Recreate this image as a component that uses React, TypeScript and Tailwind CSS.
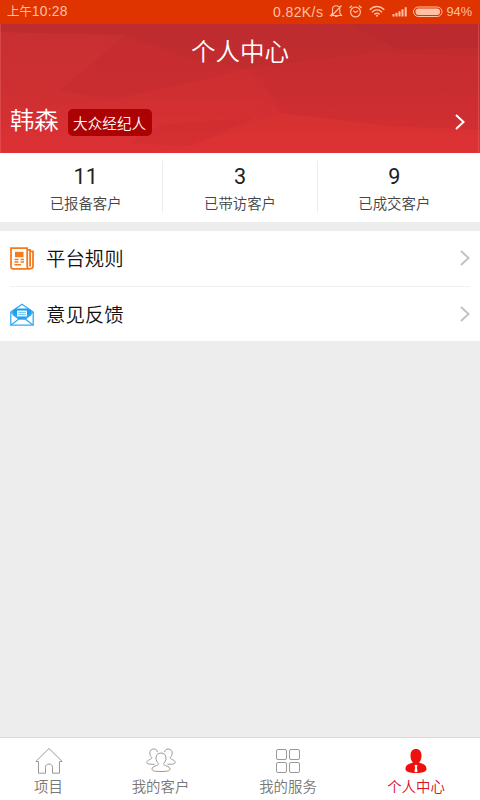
import type { ReactNode } from 'react';

const cjk = "font-['Roboto','Noto_Sans_CJK_SC',sans-serif]";

function StatusBar() {
  return (
    <div className="flex h-6 items-center bg-[#df3300] pl-[7px] font-['Liberation_Sans','Noto_Sans_CJK_SC',sans-serif] text-[#ffc0a4]">
      <span className="flex w-[266px] text-[12.4px] leading-6 whitespace-nowrap">
        上午<span className="text-[13.8px] tracking-[.3px]">10:28</span>
      </span>
      <span className="w-[56px] text-[14px] leading-6 tracking-[.4px] whitespace-nowrap">0.82K/s</span>
      <svg width="151" height="24" viewBox="329 0 151 24" fill="none" stroke="#ffc0a4" className="shrink-0">
        <path d="M330.5 15.5h11l-1.7-2.3V9.3c0-2.2-1.5-3.6-3.6-3.6s-3.7 1.4-3.7 3.6v3.9zM334.8 16.5h3M341.5 5.5l-10.500 11" strokeWidth="1.1" />
        <circle cx="355.5" cy="12" r="4.9" strokeWidth="1.2" />
        <path d="m353.2 10.8 2.3 1.7 2.5-1.7M349.5 8l2.6-2.3M361.6 8 359 5.7" strokeWidth="1.2" />
        <path d="M369.7 9.7c4.4-4.2 10.2-4.2 14.6 0M372 12.2c3-3 7-3 10 0M374.4 14.4c1.6-1.5 3.6-1.5 5.2 0" strokeWidth="1.5" />
        <circle cx="377" cy="15.8" r="1" fill="#ffc0a4" stroke="none" />
        <path d="M393.5 14v2.5M396.5 12.8v3.7M399.5 11.2v5.3M402.5 9.3v7.2M405.7 7.2v9.3" strokeWidth="2" />
        <rect x="413.5" y="7" width="28.5" height="9.5" rx="4.7" />
        <rect x="415.5" y="8.5" width="24.5" height="6.5" rx="3" fill="#ffc0a4" stroke="none" />
        <text x="446.5" y="16.3" fill="#ffc0a4" stroke="none" fontSize="12.8" fontFamily="Liberation Sans">94%</text>
      </svg>
    </div>
  );
}

function Facets() {
  return (
    <svg className="absolute inset-0" width="480" height="129" viewBox="0 24 480 129">
      <defs>
        <linearGradient id="base" x1="0" y1="0" x2="0" y2="1">
          <stop offset="0" stopColor="#c52e31" />
          <stop offset=".5" stopColor="#cd2f31" />
          <stop offset="1" stopColor="#dd3134" />
        </linearGradient>
      </defs>
      <rect y="24" width="480" height="129" fill="url(#base)" />
      <path d="M0 24h480v32l-103-4-132 16-58-11-62-22L0 32z" fill="#aa252b" opacity=".26" />
      <path d="M350 24h130v23l-80 3z" fill="#a9242b" opacity=".16" />
      <path d="M125 35 60 90 0 110V32z" fill="#d23535" opacity=".18" />
      <path d="m125 35 62 22 58 11-10 4-125 28-50-10z" fill="#bc292f" opacity=".18" />
      <path d="m245 68 132-16 103 4v27l-200 30-17-32z" fill="#bd2a2f" opacity=".2" />
      <path d="m110 100 125-28 18 0 10 35-123 27-90-10z" fill="#d83033" opacity=".2" />
      <path d="m280 113 200-30v47l-90-4z" fill="#bd2a2f" opacity=".2" />
      <path d="m130 143 60 3 63-28-93 7z" fill="#b8262c" opacity=".16" />
      <path d="m190 146 90-33 110 13 90 4v23H150z" fill="#e53838" opacity=".16" />
      <path d="M.5 24v129M478.5 24v129" stroke="#ec6262" opacity=".45" />
    </svg>
  );
}

function Header() {
  return (
    <header className="relative h-[129px]">
      <Facets />
      <div className="relative flex h-full flex-col text-white">
        <h1 className="h-[54px] pt-0.5 text-center text-[24.5px] leading-[54px] font-[350]">个人中心</h1>
        <div className="mt-[28px] flex h-8 items-center pr-[14px] pl-2.5">
          <span className="-mt-[3px] text-[24.3px] leading-8 font-[350]">韩森</span>
          <span className="ml-[9px] flex h-[27px] w-[84px] items-center justify-center rounded-[5px] bg-[#ad0204] pt-[3px] text-[14.6px] leading-[22px] font-[350] whitespace-nowrap">大众经纪人</span>
          <svg width="12" height="18" viewBox="0 0 12 18" fill="none" stroke="white" strokeWidth="2" className="ml-auto">
            <path d="m2 2 7.5 7L2 16" />
          </svg>
        </div>
      </div>
    </header>
  );
}

function Stat({ value, label, divider }: { value: string; label: string; divider?: boolean }) {
  return (
    <div className={`flex h-[52px] flex-1 flex-col items-center ${divider ? 'border-r border-[#ededed]' : ''}`}>
      <span className="mt-1 text-[21.6px] leading-6 text-[#222]">{value}</span>
      <span className="mt-[5px] text-[14.4px] leading-[22px] font-[350] text-[#444]">{label}</span>
    </div>
  );
}

function NewsIcon() {
  return (
    <svg width="24" height="24" viewBox="0 0 24 24" fill="none" stroke="#f47b20" strokeWidth="1.8">
      <path d="M1 1.2h16.2v18.3c0 1.5.7 2.3 1.9 2.3H3.2C1.7 21.8 1 21 1 19.5zM17.2 2.8h2.9v16.7M20.1 4.3h2.9v14.9c0 1.7-1.2 2.6-3.9 2.6" />
      <path d="M5 4.8h8.5v5.4H5z" fill="#f47b20" stroke="none" />
      <path d="M4.5 12.5h4M10.5 12.5H14M4.5 15h4M10.5 15H14M4.5 17.7H11" strokeWidth="1.4" />
    </svg>
  );
}

function MailIcon() {
  return (
    <svg width="24" height="24" viewBox="0 0 24 24" fill="none" stroke="#35aaf0" strokeWidth="1.3">
      <path d="M.8 9 12 1.3 23.2 9v13.2H.8z" />
      <path d="M2.500 7.5 6 5.5h12l3.500 2V12l-6 4.5h-7L2.500 12z" fill="#209eee" stroke="none" />
      <path d="m1 9 8.2 6.8h5.6L23 9M1 22l8.2-6.2M23 22l-8.2-6.2" />
      <path d="M7 7.500h10v6H7z" fill="#e3f5ff" stroke="none" />
      <path d="M8.3 9.500h7.4M8.3 11.500h7.4" stroke="#65bff5" strokeWidth=".8" />
    </svg>
  );
}

function Row({ icon, label }: { icon: ReactNode; label: string }) {
  return (
    <div className="flex h-[55px] items-center">
      {icon}
      <span className="mt-[3px] ml-3 text-[19.4px] leading-7 font-[350] text-[#111]">{label}</span>
      <svg width="12" height="18" viewBox="0 0 12 18" fill="none" stroke="#c3c3c3" strokeWidth="2" className="-mt-px mr-[-1px] ml-auto">
        <path d="m2 2 7.5 7L2 16" />
      </svg>
    </div>
  );
}

function Tab({ icon, label, width, active }: { icon: ReactNode; label: string; width: string; active?: boolean }) {
  return (
    <div className={`flex flex-col items-center ${width} ${active ? 'text-[#d6101c]' : 'text-[#777]'}`}>
      <svg width="30" height="28" viewBox="0 0 30 28" fill="none" stroke="#999" strokeWidth="1" className="mt-[9px]">
        {icon}
      </svg>
      <span className="mt-0.5 text-[14.4px] leading-[22px] font-[350] whitespace-nowrap">{label}</span>
    </div>
  );
}

export default function App() {
  return (
    <div className={`flex h-[800px] w-[480px] flex-col overflow-hidden bg-[#ededed] ${cjk}`}>
      <StatusBar />
      <Header />
      <section className="flex h-[69px] bg-white px-[9px] pt-2">
        <Stat value="11" label="已报备客户" divider />
        <Stat value="3" label="已带访客户" divider />
        <Stat value="9" label="已成交客户" />
      </section>
      <section className="mt-[9px] h-[110px] bg-white px-2.5">
        <Row icon={<NewsIcon />} label="平台规则" />
        <div className="border-t border-[#efefef]">
          <Row icon={<MailIcon />} label="意见反馈" />
        </div>
      </section>
      <nav className="mt-auto flex h-[63px] border-t border-[#dcdcdc] bg-white">
        <Tab
          width="w-[97px]"
          label="项目"
          icon={<path d="M4.5 14.5H1.8L15 1.5l13.2 13h-2.7v11.7h-7v-6c0-4.2-7-4.2-7 0v6h-7z" />}
        />
        <Tab
          width="w-[127px]"
          label="我的客户"
          icon={
            <>
              <path d="M12.400 16.500C10.800 15 10 13 10 11c0-3 2-5 5-5s5 2 5 5c0 2-.8 4-2.400 5.500-.4 2.800 6.400 2 6.400 5.700 0 1.800-3 2.300-9 2.300s-9-.5-9-2.300c0-3.700 6.800-2.900 6.400-5.700z" />
              <path d="M11.500 5.200C11 3 9.800 2 7.800 2 5.300 2 3.800 3.700 3.800 6c0 1.800.7 3.300 2 4.500.4 2.300-5 2-5 5 0 1.500 2.700 1.800 7.700 1.800M18.500 5.200C19 3 20.200 2 22.200 2c2.500 0 4 1.700 4 4 0 1.800-.7 3.300-2 4.500-.4 2.300 5 2 5 5 0 1.500-2.700 1.800-7.700 1.800" />
            </>
          }
        />
        <Tab
          width="w-32"
          label="我的服务"
          icon={
            <>
              <rect x="3.5" y="2.5" width="10" height="10" rx="1.5" />
              <rect x="16.5" y="2.5" width="10" height="10" rx="1.5" />
              <rect x="3.5" y="15.5" width="10" height="10" rx="1.5" />
              <rect x="16.5" y="15.5" width="10" height="10" rx="1.5" />
            </>
          }
        />
        <Tab
          active
          width="w-32"
          label="个人中心"
          icon={
            <>
              <path
                d="M12 15.5c-1.7-1.6-2.5-4-2.5-7C9.500 4.500 11.500 2 15 2s5.500 2.500 5.500 6.500c0 3-.8 5.400-2.500 7 2.500 1.200 7.500 1.500 7.500 6.500 0 2.700-4 4-10.500 4S4.500 24.700 4.500 22c0-5 5-5.300 7.500-6.500z"
                fill="#ee0f0f"
                stroke="none"
              />
              <path d="m13.4 18.5 1.600-.7 1.600.7-.8 2 .8 4-1.600 1-1.600-1 .8-4z" fill="white" stroke="none" />
            </>
          }
        />
      </nav>
    </div>
  );
}
